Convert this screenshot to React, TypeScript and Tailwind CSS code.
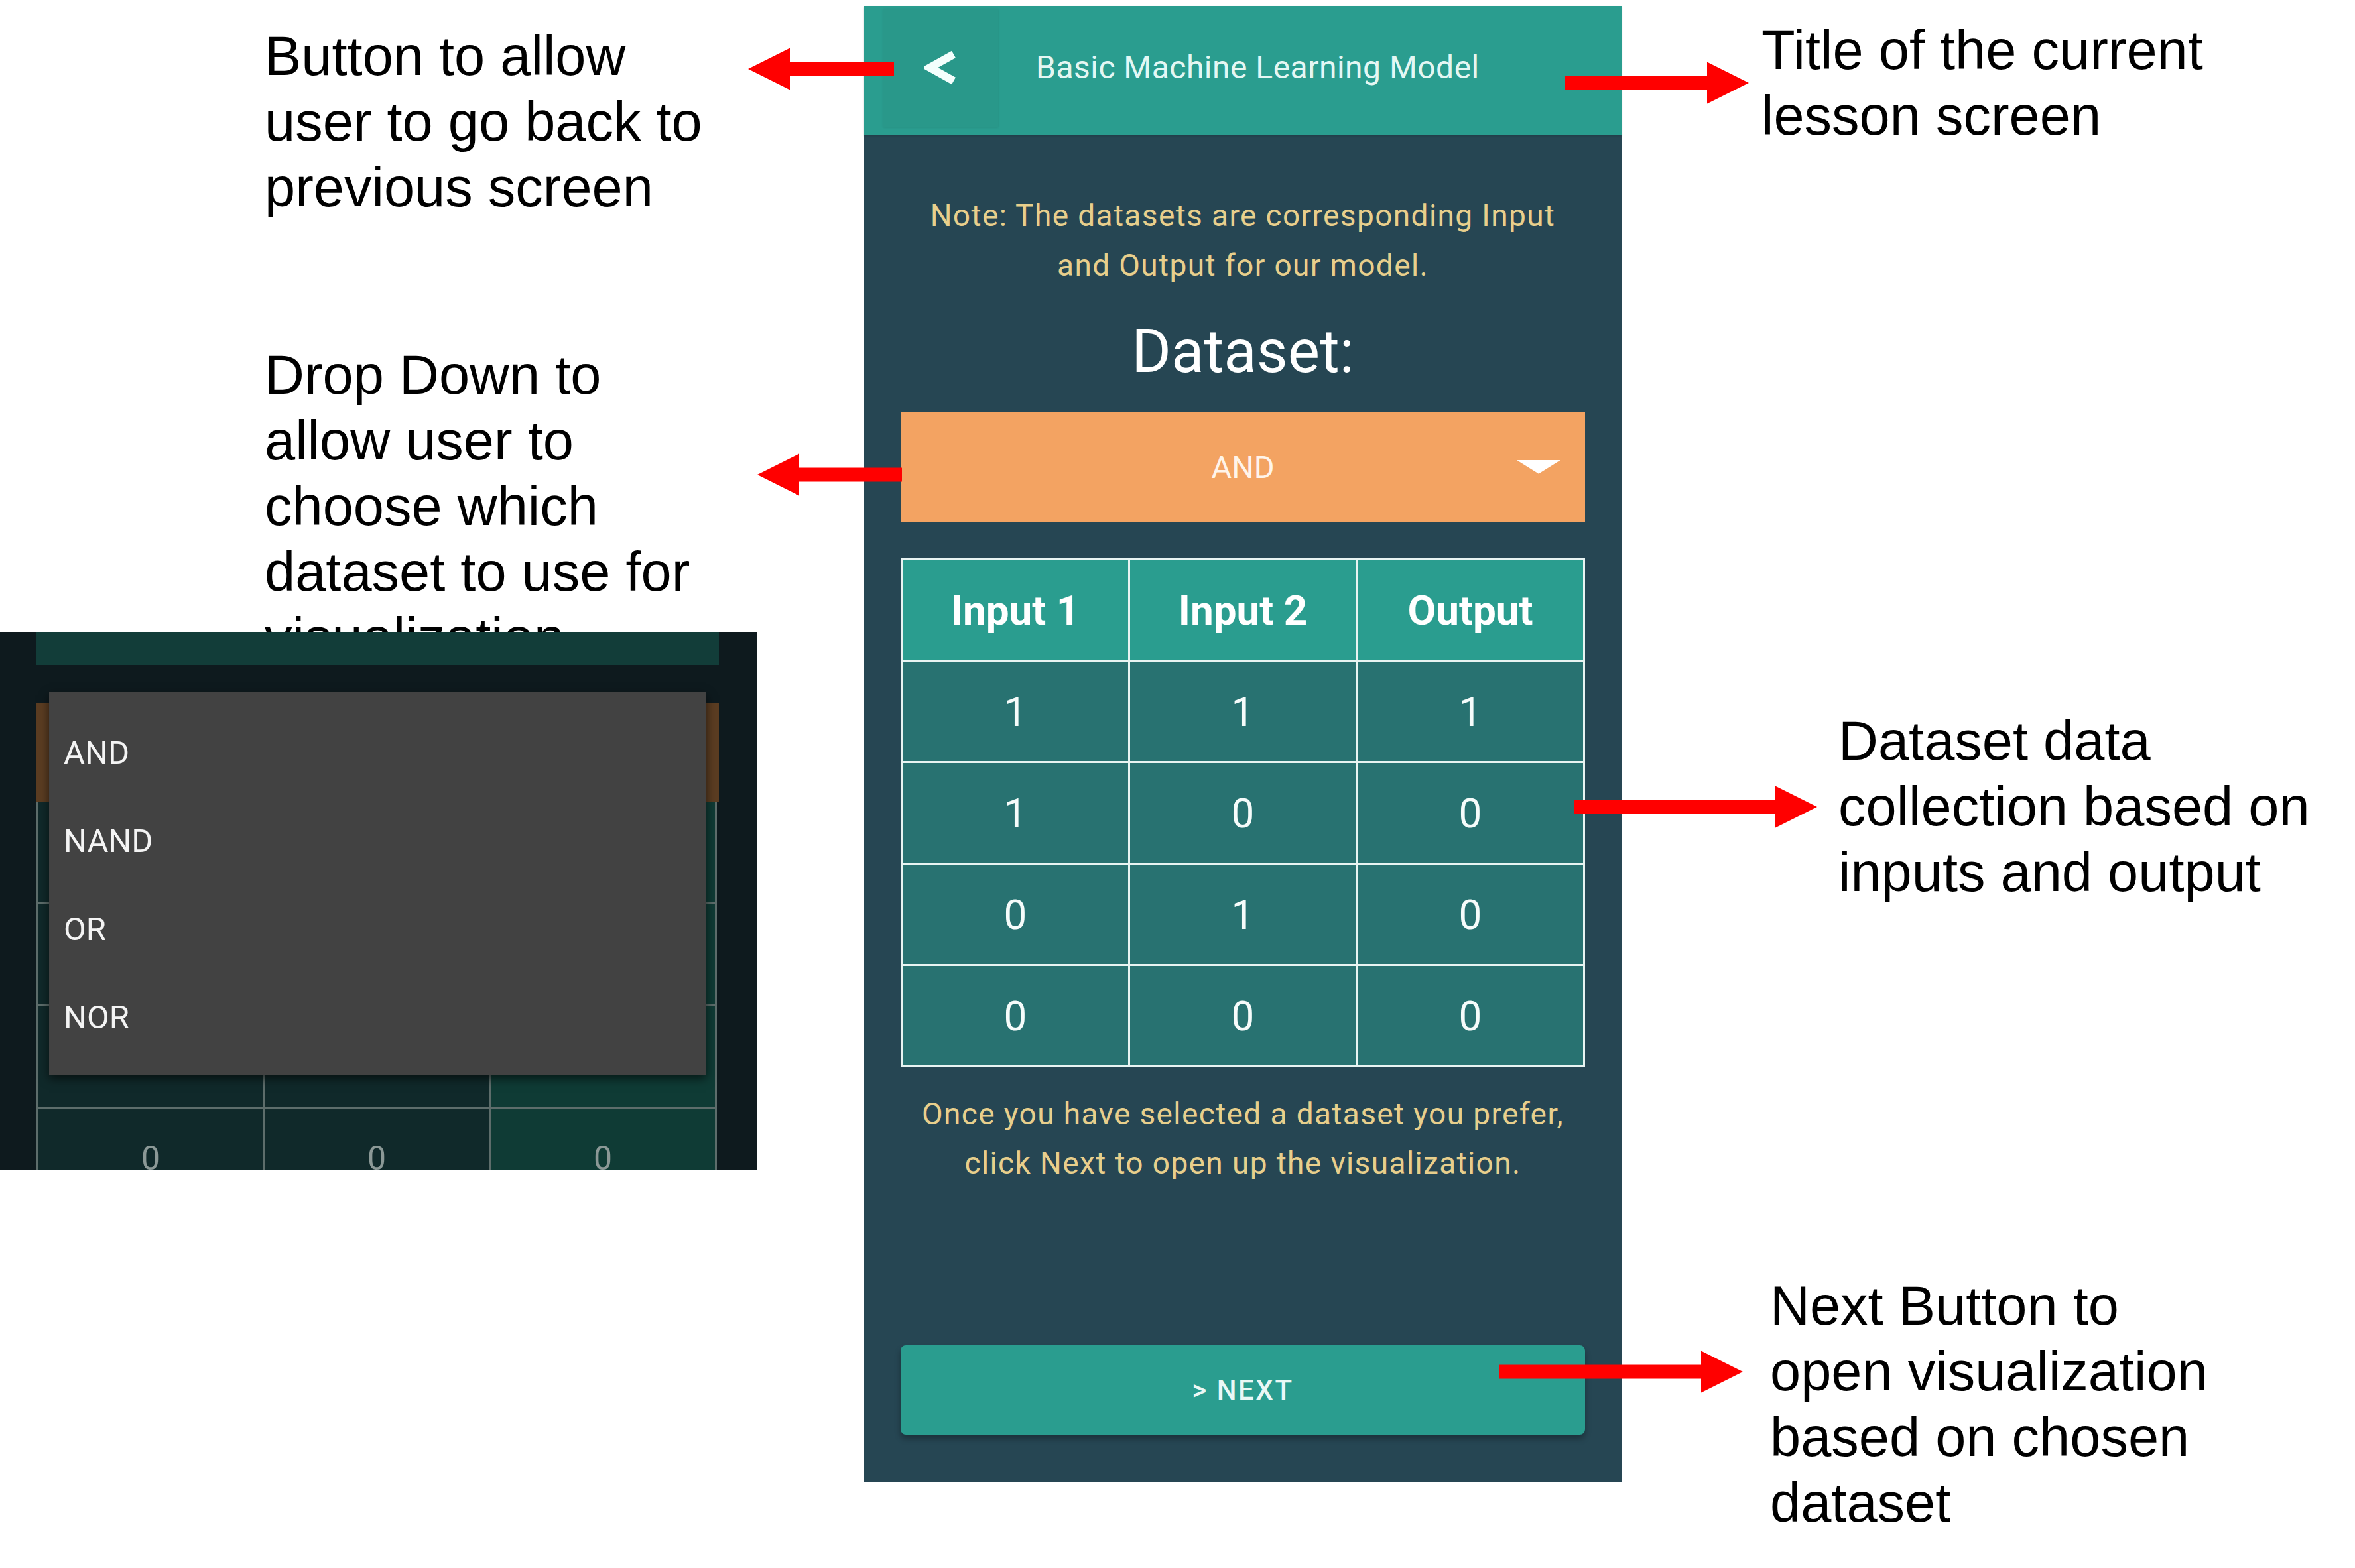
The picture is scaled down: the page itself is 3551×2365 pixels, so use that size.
import React from "react"

const note = "text-[#e8cf8c]"

const rows = [
    ["1", "1", "1"],
    ["1", "0", "0"],
    ["0", "1", "0"],
    ["0", "0", "0"],
]

const options = ["AND", "NAND", "OR", "NOR"]

// red annotation arrows: [tailX, tipX, centerY]
const arrows: [number, number, number][] = [
    [1348, 1128, 104],
    [2360, 2637, 125],
    [1360, 1142, 716],
    [2373, 2740, 1217],
    [2261, 2628, 2069],
]

function arrowPoints(tail: number, tip: number, y: number) {
    const d = tip > tail ? 1 : -1
    const base = tip - d * 63
    return [
        [tail, y - 10.5],
        [base, y - 10.5],
        [base, y - 31.5],
        [tip, y],
        [base, y + 31.5],
        [base, y + 10.5],
        [tail, y + 10.5],
    ]
        .map((p) => p.join(","))
        .join(" ")
}

function Annotation({ lines, className }: { lines: string[]; className: string }) {
    return (
        <div className={`whitespace-nowrap font-['Liberation_Sans',Arial,sans-serif] text-[83px] leading-[99px] text-black ${className}`}>
            {lines.map((l) => (
                <div key={l}>{l}</div>
            ))}
        </div>
    )
}

function DropdownInset() {
    return (
        <div className="relative h-[812px] w-[1141px] shrink-0 overflow-hidden bg-[#0e1a1e] font-['Roboto',sans-serif]">
            <div className="ml-[55px] h-[50px] w-[1029px] bg-[#123d39]" />
            <div className="ml-[55px] mt-[57px] h-[150px] w-[1029px] bg-[#5b3d22]" />
            <div className="ml-[55px] grid w-[1026px] grid-cols-3 gap-[3px] bg-[#5d6d6b] px-[3px] pb-[3px]">
                {rows.flat().map((v, i) => (
                    <div
                        key={i}
                        className={`flex h-[151px] items-center justify-center text-[50px] text-[#8b9896] ${i % 3 === 2 ? "bg-[#0f3b35]" : "bg-[#10292a]"}`}
                    >
                        {v}
                    </div>
                ))}
            </div>

            {/* open menu over the dimmed screen */}
            <div className="absolute left-[74px] top-[90px] h-[578px] w-[991px] bg-[#424242] pt-[26px] shadow-[0_6px_14px_rgba(0,0,0,0.6)]">
                {options.map((o) => (
                    <div key={o} className="pl-[22px] text-[49px] leading-[133px] text-[#f4f4f4]">
                        {o}
                    </div>
                ))}
            </div>
        </div>
    )
}

function Phone() {
    return (
        <div className="mt-[9px] flex h-[2226px] w-[1142px] shrink-0 flex-col bg-[#264653] font-['Roboto',sans-serif]">
            <header className="flex h-[194px] shrink-0 items-center bg-[#2a9d8f] pb-[8px] shadow-[0_2px_3px_rgba(0,0,0,0.15)]">
                <button className="ml-[29px] flex h-[178px] w-[173px] items-center justify-center bg-[#29988a] shadow-[0_1px_3px_rgba(0,0,0,0.12)]">
                    <svg width="52" height="54" viewBox="0 0 52 54" fill="none">
                        <polyline points="45,7 9,27 45,47" stroke="#f4fffd" strokeWidth="12" strokeLinejoin="miter" />
                    </svg>
                </button>
                <h1 className="ml-[57px] text-[48px] leading-none tracking-[0.01em] text-[#e4f7f3]">
                    Basic Machine Learning Model
                </h1>
            </header>

            <p className={`mt-[85px] text-center text-[46px] leading-[75px] tracking-[0.03em] ${note}`}>
                Note: The datasets are corresponding Input
                <br />
                and Output for our model.
            </p>

            <h2 className="mt-[47px] text-center text-[91px] leading-none text-white">Dataset:</h2>

            <div className="mx-[55px] mt-[45px] grid h-[166px] shrink-0 grid-cols-[1fr_auto_1fr] items-center bg-[#f3a362]">
                <span />
                <span className="text-[47px] leading-none text-[#fff4ea]">AND</span>
                <svg className="mr-[35px] justify-self-end" width="70" height="22" viewBox="0 0 70 22">
                    <path d="M2 1 H68 L36 21 Q35 22 34 21 Z" fill="#ffffff" />
                </svg>
            </div>

            <div className="mx-[55px] mt-[55px] grid grid-cols-3 gap-[3px] bg-[#e8f4f2] p-[3px]">
                {["Input 1", "Input 2", "Output"].map((h) => (
                    <div key={h} className="flex h-[150px] items-center justify-center bg-[#2a9d8f] text-[62px] font-bold text-white">
                        {h}
                    </div>
                ))}
                {rows.flat().map((v, i) => (
                    <div key={i} className="flex h-[150px] items-center justify-center bg-[#287271] text-[62px] text-[#f6fcfb]">
                        {v}
                    </div>
                ))}
            </div>

            <p className={`mt-[33px] text-center text-[46px] leading-[74px] tracking-[0.03em] ${note}`}>
                Once you have selected a dataset you prefer,
                <br />
                click Next to open up the visualization.
            </p>

            <button className="mx-[55px] mt-[238px] flex h-[135px] shrink-0 items-center justify-center rounded-[8px] bg-[#2a9d8f] text-[42px] font-medium tracking-[0.06em] text-[#eaf8f5] shadow-[0_6px_10px_rgba(0,0,0,0.3)]">
                &gt; NEXT
            </button>
        </div>
    )
}

export default function App() {
    return (
        <div className="relative flex h-[2365px] w-[3551px] overflow-hidden bg-white">
            <div className="flex w-[1303px] shrink-0 flex-col">
                <Annotation className="mt-[35px] pl-[399px]" lines={["Button to allow", "user to go back to", "previous screen"]} />
                <Annotation
                    className="mt-[184px] h-[437px] overflow-hidden pl-[399px]"
                    lines={["Drop Down to", "allow user to", "choose which", "dataset to use for", "visualization"]}
                />
                <DropdownInset />
            </div>

            <Phone />

            <div className="flex flex-1 flex-col">
                <Annotation className="mt-[26px] pl-[211px]" lines={["Title of the current", "lesson screen"]} />
                <Annotation className="mt-[844px] pl-[327px]" lines={["Dataset data", "collection based on", "inputs and output"]} />
                <Annotation
                    className="mt-[555px] pl-[224px]"
                    lines={["Next Button to", "open visualization", "based on chosen", "dataset"]}
                />
            </div>

            <svg className="pointer-events-none absolute inset-0" width="3551" height="2365">
                {arrows.map(([tail, tip, y], i) => (
                    <polygon key={i} points={arrowPoints(tail, tip, y)} fill="#ff0000" />
                ))}
            </svg>
        </div>
    )
}
